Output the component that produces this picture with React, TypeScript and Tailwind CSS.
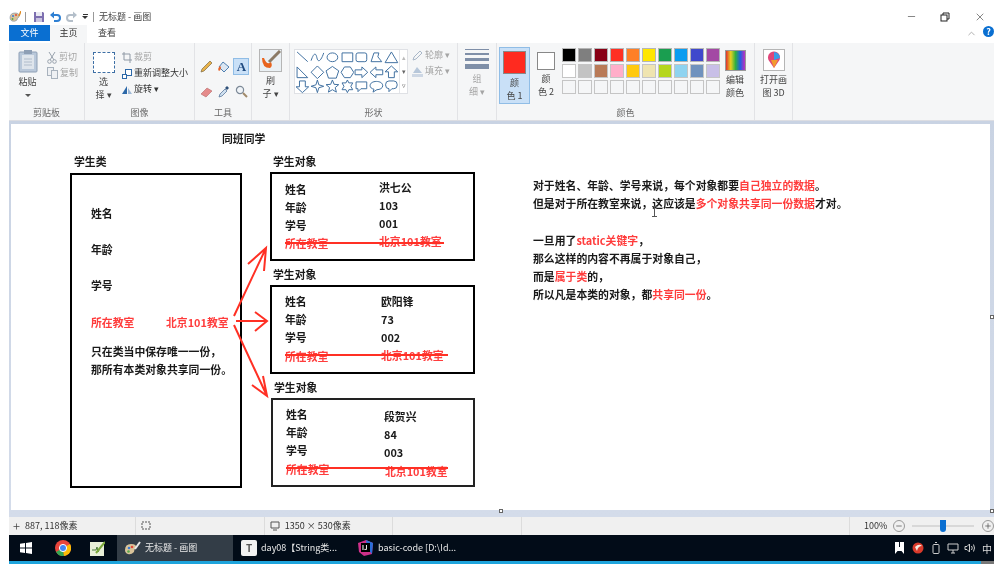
import type { ReactNode } from 'react'
import { Minus, X, ChevronUp, Plus } from 'lucide-react'

const row1 = ['bg-[#000000]', 'bg-[#7f7f7f]', 'bg-[#880015]', 'bg-[#ff3024]', 'bg-[#ff7f27]', 'bg-[#ffe600]', 'bg-[#1a9e50]', 'bg-[#0a9cf0]', 'bg-[#3f48cc]', 'bg-[#a349a4]']
const row2 = ['bg-[#ffffff]', 'bg-[#c3c3c3]', 'bg-[#b97a57]', 'bg-[#ffaec9]', 'bg-[#ffc90e]', 'bg-[#efe4b0]', 'bg-[#b5d61d]', 'bg-[#8fd3f0]', 'bg-[#7092be]', 'bg-[#c8bfe7]']

const shapes = [
  'M2 2 L13 12',
  'M1 11 C4 2 6 3 7 8 S11 12 14 3',
  'M2 7.5 a5.5 4.5 0 1 0 11 0 a5.5 4.5 0 1 0 -11 0',
  'M2 3 H13 V12 H2 Z',
  'M4 3 H11 Q13 3 13 5 V10 Q13 12 11 12 H4 Q2 12 2 10 V5 Q2 3 4 3 Z',
  'M2 12 L5 3 H10 L9 7 L13 12 Z',
  'M7.5 2 L14 13 H1 Z',
  'M2 2 V13 H13 Z',
  'M7.5 1 L14 7.5 L7.5 14 L1 7.5 Z',
  'M7.5 1.5 L14 6 L11.5 13.5 H3.5 L1 6 Z',
  'M4.5 2 H10.5 L14 7.5 L10.5 13 H4.5 L1 7.5 Z',
  'M1 5 H8 V2 L14 7.5 L8 13 V10 H1 Z',
  'M14 5 H7 V2 L1 7.5 L7 13 V10 H14 Z',
  'M7.5 1 L14 7 H10.5 V13 H4.5 V7 H1 Z',
  'M4.5 2 H10.5 V8 H14 L7.5 14 L1 8 H4.5 Z',
  'M7.5 1 L9 6 L14 7.5 L9 9 L7.5 14 L6 9 L1 7.5 L6 6 Z',
  'M7.5 1 L9.3 5.5 L14 5.8 L10.4 8.8 L11.6 13.5 L7.5 11 L3.4 13.5 L4.6 8.8 L1 5.8 L5.7 5.5 Z',
  'M7.5 1 L9 4 H13 L11 7.5 L13 11 H9 L7.5 14 L6 11 H2 L4 7.5 L2 4 H6 Z',
  'M2 3 H13 V10 H7 L4 13 V10 H2 Z',
  'M7.5 2.5 C11 2.5 14 4 14 7 C14 9.5 11 11 8 11 L4 13.5 L5 10.5 C2.5 10 1 8.5 1 7 C1 4 4 2.5 7.5 2.5 Z',
  'M5 2 H10 Q13.5 2 13.5 6 Q13.5 10 10 10 H8 L5 13 V10 Q1.5 10 1.5 6 Q1.5 2 5 2 Z',
]

function Group({ className, label, children }: { className: string; label: string; children: ReactNode }) {
  return (
    <div className={`flex flex-col border-r border-[#e2e3e6] ${className}`}>
      <div className="h-[62px] flex pt-[6px]">{children}</div>
      <div className="text-center text-[9px] leading-[14px] text-[#6a6a6a] mt-[1px]">{label}</div>
    </div>
  )
}

function Label({ lines, className = '' }: { lines: string[]; className?: string }) {
  return (
    <div className={`text-center text-[9px] leading-[13px] text-[#444] mt-[2px] ${className}`}>
      {lines.map((l) => <div key={l}>{l}</div>)}
    </div>
  )
}

function Small({ icon, text, dim }: { icon: ReactNode; text: string; dim?: boolean }) {
  return (
    <div className={`flex items-center h-[16px] gap-[2px] text-[9px] leading-[14px] whitespace-nowrap ${dim ? 'text-[#a5a5a5]' : 'text-[#333]'}`}>
      {icon}
      <span>{text}</span>
    </div>
  )
}

function TitleBar() {
  return (
    <div className="h-[17px] bg-white flex items-center text-[9px] text-[#444]">
      <svg width="12" height="12" viewBox="0 0 12 12">
        <path d="M1 7 Q1 2 6 2 Q11 2 10 6 Q8 7 8 9 Q6 11 3 10 Q1 9 1 7 Z" fill="#d9c39a" stroke="#7a8aa0" strokeWidth=".6" />
        <circle cx="4" cy="5" r="1" fill="#3a7bd5" /><circle cx="7" cy="4" r="1" fill="#e04a3a" /><circle cx="3.5" cy="8" r="1" fill="#5aa84a" />
        <path d="M10 5 L12 0" stroke="#e08a20" strokeWidth="1.4" />
      </svg>
      <div className="w-px h-[10px] bg-[#999] ml-[4px]" />
      <svg className="ml-[7px]" width="12" height="12" viewBox="0 0 12 12">
        <path d="M1 1 H10 L11 2 V11 H1 Z" fill="#7d6fb0" />
        <rect x="3" y="1" width="6" height="4" fill="#e9e9f2" />
        <rect x="3" y="7" width="6" height="4" fill="#c9c3df" />
      </svg>
      <svg className="ml-[5px]" width="11" height="11" viewBox="0 0 11 11" fill="none">
        <path d="M2 4 H7 A3 3 0 0 1 7 10 H4" stroke="#2d7fd3" strokeWidth="2" />
        <path d="M4 0.5 V7.5 L0 4 Z" fill="#2d7fd3" />
      </svg>
      <svg className="ml-[5px]" width="11" height="11" viewBox="0 0 11 11" fill="none">
        <path d="M9 4 H4 A3 3 0 0 0 4 10 H7" stroke="#b4bfca" strokeWidth="2" />
        <path d="M7 0.5 V7.5 L11 4 Z" fill="#b4bfca" />
      </svg>
      <div className="ml-[5px] flex flex-col items-center gap-[1px]">
        <div className="w-[5px] h-px bg-[#333]" />
        <div className="w-0 h-0 border-x-[3px] border-x-transparent border-t-[3px] border-t-[#333]" />
      </div>
      <div className="w-px h-[10px] bg-[#999] ml-[5px]" />
      <span className="ml-[5px]">无标题 - 画图</span>
      <div className="ml-auto flex items-center text-[#222]">
        <Minus size={11} strokeWidth={1.2} className="mr-[23px]" />
        <svg className="mr-[24px]" width="10" height="10" viewBox="0 0 10 10" fill="none" stroke="#222" strokeWidth="1">
          <rect x="1" y="3" width="6" height="6" />
          <path d="M3 3 V1 H9 V7 H7" />
        </svg>
        <X size={12} strokeWidth={1.1} className="mr-[8px]" />
      </div>
    </div>
  )
}

function TabRow() {
  return (
    <div className="h-[18px] bg-white flex items-start text-[9px] leading-[16px]">
      <div className="w-[41px] h-[16px] bg-[#0a6fd1] text-white text-center">文件</div>
      <div className="w-[37px] h-[18px] bg-[#f5f6f7] text-[#333] text-center">主页</div>
      <div className="ml-[11px] text-[#444]">查看</div>
      <ChevronUp size={11} className="ml-auto mt-[3px] text-[#aaa]" />
      <div className="ml-[6px] mt-[1px] w-[11px] h-[11px] rounded-full bg-[#0a6fd1] text-white text-[9px] leading-[11px] font-bold text-center">?</div>
    </div>
  )
}

function Ribbon() {
  return (
    <div className="h-[78px] bg-[#f5f6f7] flex border-b border-[#dcdde2]">
      <Group className="w-[76px]" label="剪贴板">
        <div className="w-[38px] flex flex-col items-center pr-[1px]">
          <svg width="20" height="24" viewBox="0 0 20 24">
            <rect x="1" y="3" width="18" height="20" rx="1" fill="#b9c8da" stroke="#8e9fb5" />
            <rect x="4" y="6" width="12" height="14" fill="#dfe5ec" />
            <rect x="6" y="1" width="8" height="4" fill="#8e9fb5" />
            <path d="M6 10 H14 M6 13 H14 M6 16 H14" stroke="#b0bccb" />
          </svg>
          <Label lines={['粘贴']} className="mt-[1px]" />
          <div className="mt-[6px] w-0 h-0 border-x-[3px] border-x-transparent border-t-[3px] border-t-[#555]" />
        </div>
        <div className="flex flex-col">
          <Small dim text="剪切" icon={<svg width="10" height="13" viewBox="0 0 10 13" fill="none" stroke="#98a2ad"><path d="M2 1 L7 9 M8 1 L3 9" /><circle cx="2.5" cy="10.5" r="1.8" /><circle cx="7.5" cy="10.5" r="1.8" /></svg>} />
          <Small dim text="复制" icon={<svg width="11" height="12" viewBox="0 0 11 12" fill="#eef0f3" stroke="#a8b2bd"><rect x="0.5" y="0.5" width="6" height="8" /><rect x="4.5" y="3.5" width="6" height="8" /></svg>} />
        </div>
      </Group>
      <Group className="w-[110px]" label="图像">
        <div className="w-[37px] flex flex-col items-center">
          <div className="w-[22px] h-[21px] mt-[3px] border border-dashed border-[#3d6fa5] bg-white" />
          <Label lines={['选', '择 ▾']} className="mt-[0px]" />
        </div>
        <div className="flex flex-col">
          <Small dim text="裁剪" icon={<svg width="10" height="11" viewBox="0 0 10 11" fill="none" stroke="#8f99a5"><path d="M2 0 V8 H10 M0 2 H8 V11" /></svg>} />
          <Small text="重新调整大小" icon={<svg width="10" height="11" viewBox="0 0 10 11" fill="#fff" stroke="#2c68a8"><rect x="3.5" y="1.5" width="6" height="6" /><rect x="0.5" y="6.5" width="4" height="4" /></svg>} />
          <Small text="旋转 ▾" icon={<svg width="10" height="11" viewBox="0 0 10 11"><path d="M5 2 L5 10 H0 Z" fill="#2c68a8" /><path d="M6 4 L10 10 H6 Z" fill="#9db8d6" /></svg>} />
        </div>
      </Group>
      <Group className="w-[57px]" label="工具">
        <div className="grid grid-cols-3 grid-rows-2 w-[52px] ml-[3px] h-[50px] mt-[5px] items-center justify-items-center">
          <svg width="13" height="13" viewBox="0 0 13 13"><path d="M1 12 L2 9 L10 1 L12 3 L4 11 Z" fill="#e8b24a" stroke="#7c6a45" strokeWidth=".7" /></svg>
          <svg width="14" height="14" viewBox="0 0 14 14"><path d="M6 2 L12 7 L7 12 L2 7 Z" fill="#dbe6f2" stroke="#4f7fb0" /><path d="M3 6 Q0 9 2 11 Q4 10 4 7 Z" fill="#e8642a" /></svg>
          <div className="w-[16px] h-[17px] bg-[#c9e0f7] border border-[#90bde6] text-[#1f4a80] text-[13px] leading-[15px] font-bold text-center font-['Liberation_Serif',serif]">A</div>
          <svg width="13" height="12" viewBox="0 0 13 12"><path d="M1 8 L7 2 L12 5 L6 11 Z" fill="#e58b8b" stroke="#b56a6a" strokeWidth=".6" /></svg>
          <svg width="12" height="13" viewBox="0 0 12 13"><path d="M1 12 L2 9 L7 4 L9 6 L4 11 Z" fill="#cfe0f0" stroke="#4a6a90" strokeWidth=".7" /><path d="M7 3 L9 1 L11 3 L9 5 Z" fill="#2d4f78" /></svg>
          <svg width="13" height="13" viewBox="0 0 13 13" fill="none" stroke="#7d8a98" strokeWidth="1.2"><circle cx="5" cy="5" r="3.6" fill="#f0f4f8" /><path d="M8 8 L12 12" strokeWidth="2" stroke="#a08a6a" /></svg>
        </div>
      </Group>
      <Group className="w-[38px]" label="">
        <div className="w-[38px] flex flex-col items-center">
          <div className="w-[23px] h-[23px] border border-[#b5b5b5] bg-[#eaf0f4]">
            <svg width="21" height="21" viewBox="0 0 21 21" fill="none">
              <path d="M20 1 L9 12" stroke="#8a7a66" strokeWidth="3" />
              <path d="M2 8 Q2 18 10 18 Q13 16 11 12 Q7 16 4 8 Z" fill="#e8641e" />
            </svg>
          </div>
          <Label lines={['刷', '子 ▾']} className="mt-[1px]" />
        </div>
      </Group>
      <Group className="w-[168px]" label="形状">
        <div className="ml-[4px] w-[114px] h-[45px] bg-white border border-[#dfe1e5] flex">
          <div className="w-[104px] grid grid-cols-7 content-start">
            {shapes.map((d) => (
              <svg key={d} className="w-[14.8px] h-[14.6px]" viewBox="0 0 15 15" fill="none" stroke="#3f6f9f" strokeWidth="1">
                <path d={d} />
              </svg>
            ))}
          </div>
          <div className="flex-1 border-l border-[#e3e5e9] flex flex-col items-center justify-around text-[7px] leading-[9px] text-[#666]">
            <span className="text-[#bbb]">▴</span><span>▾</span><span>▿</span>
          </div>
        </div>
        <div className="flex flex-col ml-[4px] mt-[-2px]">
          <Small dim text="轮廓 ▾" icon={<svg width="11" height="11" viewBox="0 0 11 11" fill="none" stroke="#a9b7c8"><path d="M1 10 L2 7 L8 1 L10 3 L4 9 Z" /></svg>} />
          <Small dim text="填充 ▾" icon={<svg width="11" height="11" viewBox="0 0 11 11"><path d="M5 1 L10 7 H1 Z" fill="#b7c7da" /><rect x="0" y="8" width="11" height="3" fill="#cdd7e4" /></svg>} />
        </div>
      </Group>
      <Group className="w-[39px]" label="">
        <div className="w-[39px] flex flex-col items-center">
          <div className="w-[24px] flex flex-col gap-[3px]">
            <div className="h-px bg-[#7f8fa8]" />
            <div className="h-[2px] bg-[#7f8fa8]" />
            <div className="h-[3px] bg-[#7f8fa8]" />
            <div className="h-[5px] bg-[#7f8fa8]" />
          </div>
          <Label lines={['组', '细 ▾']} className="mt-[3px] text-[#a5a5a5]" />
        </div>
      </Group>
      <Group className="w-[258px]" label="颜色">
        <div className="flex -mt-[2px] ml-[2px]">
          <div className="w-[31px] h-[57px] bg-[#c9e0f7] border border-[#90bde6] flex flex-col items-center pt-[3px]">
            <div className="w-[23px] h-[23px] bg-[#ff2a1f] border border-[#888]" />
            <Label lines={['颜', '色 1']} className="mt-[0px]" />
          </div>
          <div className="w-[32px] flex flex-col items-center pt-[5px]">
            <div className="w-[18px] h-[18px] bg-white border border-[#888]" />
            <Label lines={['颜', '色 2']} className="mt-[2px]" />
          </div>
          <div className="grid grid-cols-10 gap-[2px] content-start pt-[1px]">
            {row1.map((c, i) => <div key={'a' + i} className={`w-[14px] h-[14px] border border-[#b5b5b5] ${c}`} />)}
            {row2.map((c, i) => <div key={'b' + i} className={`w-[14px] h-[14px] border border-[#c5c5c5] ${c}`} />)}
            {row1.map((_, i) => <div key={'c' + i} className="w-[14px] h-[14px] border border-[#c5c5c5] bg-[#f5f6f7]" />)}
          </div>
          <div className="w-[30px] flex flex-col items-center pt-[3px]">
            <div className="w-[21px] h-[21px] border border-[#999] bg-[linear-gradient(90deg,#e03030,#e8d020,#30b040,#2060e0,#c030c0)]" />
            <Label lines={['编辑', '颜色']} className="mt-[2px]" />
          </div>
        </div>
      </Group>
      <Group className="w-[38px]" label="">
        <div className="w-[38px] flex flex-col items-center">
          <div className="w-[22px] h-[22px] bg-white border border-[#b5b5b5] flex items-center justify-center">
            <svg width="14" height="18" viewBox="0 0 14 18">
              <path d="M7 17 L1.5 9 A6 6 0 1 1 12.5 9 Z" fill="#e0457a" />
              <path d="M7 1 A6 6 0 0 1 13 7 L7 9 Z" fill="#3a9be8" />
              <path d="M7 17 L4 9 L11 9 Z" fill="#f29a2e" />
            </svg>
          </div>
          <Label lines={['打开画', '图 3D']} className="mt-[2px]" />
        </div>
      </Group>
    </div>
  )
}

function Txt({ className, children }: { className: string; children: ReactNode }) {
  return <div className={`absolute whitespace-nowrap text-[10.85px] leading-[14px] font-bold ${className}`}>{children}</div>
}

const red = 'text-[#ff3c3c]'
const black = 'text-[#1a1a1a]'

function Canvas() {
  return (
    <div className="relative ml-[2px] mt-[3px] w-[979px] h-[386px] bg-white">
      <Txt className={`left-[211px] top-[7px] ${black}`}>同班同学</Txt>
      <Txt className={`left-[63px] top-[30px] ${black}`}>学生类</Txt>

      <div className="absolute left-[59px] top-[49px] w-[172px] h-[315px] border-2 border-black" />
      <Txt className={`left-[80px] top-[82px] ${black}`}>姓名</Txt>
      <Txt className={`left-[80px] top-[118px] ${black}`}>年龄</Txt>
      <Txt className={`left-[80px] top-[154px] ${black}`}>学号</Txt>
      <Txt className={`left-[80px] top-[191px] ${red}`}>所在教室</Txt>
      <Txt className={`left-[155px] top-[191px] ${red}`}>北京101教室</Txt>
      <Txt className={`left-[80px] top-[220px] ${black}`}>只在类当中保存唯一一份，</Txt>
      <Txt className={`left-[80px] top-[238px] ${black}`}>那所有本类对象共享同一份。</Txt>

      <Txt className={`left-[262px] top-[30px] ${black}`}>学生对象</Txt>
      <div className="absolute left-[259px] top-[48px] w-[205px] h-[89px] border-2 border-black" />
      <Txt className={`left-[274px] top-[58px] ${black}`}>姓名</Txt>
      <Txt className={`left-[368px] top-[56px] ${black}`}>洪七公</Txt>
      <Txt className={`left-[274px] top-[76px] ${black}`}>年龄</Txt>
      <Txt className={`left-[368px] top-[74px] ${black}`}>103</Txt>
      <Txt className={`left-[274px] top-[94px] ${black}`}>学号</Txt>
      <Txt className={`left-[368px] top-[92px] ${black}`}>001</Txt>
      <Txt className={`left-[274px] top-[112px] ${red}`}>所在教室</Txt>
      <Txt className={`left-[368px] top-[110px] ${red}`}>北京101教室</Txt>

      <Txt className={`left-[262px] top-[143px] ${black}`}>学生对象</Txt>
      <div className="absolute left-[259px] top-[161px] w-[205px] h-[89px] border-2 border-black" />
      <Txt className={`left-[274px] top-[170px] ${black}`}>姓名</Txt>
      <Txt className={`left-[370px] top-[170px] ${black}`}>欧阳锋</Txt>
      <Txt className={`left-[274px] top-[188px] ${black}`}>年龄</Txt>
      <Txt className={`left-[370px] top-[188px] ${black}`}>73</Txt>
      <Txt className={`left-[274px] top-[206px] ${black}`}>学号</Txt>
      <Txt className={`left-[370px] top-[206px] ${black}`}>002</Txt>
      <Txt className={`left-[274px] top-[225px] ${red}`}>所在教室</Txt>
      <Txt className={`left-[370px] top-[224px] ${red}`}>北京101教室</Txt>

      <Txt className={`left-[263px] top-[256px] ${black}`}>学生对象</Txt>
      <div className="absolute left-[260px] top-[274px] w-[204px] h-[89px] border-2 border-[#222]" />
      <Txt className={`left-[275px] top-[283px] ${black}`}>姓名</Txt>
      <Txt className={`left-[373px] top-[285px] ${black}`}>段贺兴</Txt>
      <Txt className={`left-[275px] top-[301px] ${black}`}>年龄</Txt>
      <Txt className={`left-[373px] top-[303px] ${black}`}>84</Txt>
      <Txt className={`left-[275px] top-[319px] ${black}`}>学号</Txt>
      <Txt className={`left-[373px] top-[321px] ${black}`}>003</Txt>
      <Txt className={`left-[275px] top-[338px] ${red}`}>所在教室</Txt>
      <Txt className={`left-[374px] top-[340px] ${red}`}>北京101教室</Txt>

      <svg className="absolute inset-0" width="979" height="386" viewBox="11 124 979 386" fill="none" stroke="#ff3024" strokeWidth="2">
        <path d="M285 243 H444" />
        <path d="M285 355 H448" />
        <path d="M286 468 H448" />
        <path d="M234 316 L266 248 M248 264 L266 248 L264 271" />
        <path d="M236 321 H267 M255 312 L267 321 L255 331" />
        <path d="M234 325 L267 396 M252 385 L267 396 L263 376" />
      </svg>

      <Txt className={`left-[522px] top-[54px] ${black}`}>对于姓名、年龄、学号来说，每个对象都要<span className={red}>自己独立的数据</span>。</Txt>
      <Txt className={`left-[522px] top-[72px] ${black}`}>但是对于所在教室来说，这应该是<span className={red}>多个对象共享同一份数据</span>才对。</Txt>
      <Txt className={`left-[522px] top-[109px] ${black}`}>一旦用了<span className={red}>static关键字</span>，</Txt>
      <Txt className={`left-[522px] top-[127px] ${black}`}>那么这样的内容不再属于对象自己，</Txt>
      <Txt className={`left-[522px] top-[145px] ${black}`}>而是<span className={red}>属于类</span>的，</Txt>
      <Txt className={`left-[522px] top-[163px] ${black}`}>所以凡是本类的对象，都<span className={red}>共享同一份</span>。</Txt>

      {/* text cursor over the canvas */}
      <svg className="absolute left-[641px] top-[82px]" width="5" height="11" viewBox="0 0 5 11" fill="none" stroke="#555">
        <path d="M0 .5 H5 M2.5 .5 V10.5 M0 10.5 H5" />
      </svg>
    </div>
  )
}

function StatusBar() {
  return (
    <div className="h-[18px] bg-[#f0f0f0] flex items-center text-[9px] text-[#333]">
      <div className="w-[128px] h-full flex items-center border-r border-[#dcdcdc] pl-[3px]">
        <Plus size={9} className="text-[#444]" />
        <span className="ml-[4px]">887, 118像素</span>
      </div>
      <div className="w-[129px] h-full flex items-center border-r border-[#dcdcdc] pl-[5px]">
        <svg width="10" height="10" viewBox="0 0 10 10" fill="none" stroke="#555"><path d="M1 1 H9 V8 H1 Z" strokeDasharray="2 1" /></svg>
      </div>
      <div className="w-[129px] h-full flex items-center border-r border-[#dcdcdc] pl-[5px]">
        <svg width="10" height="10" viewBox="0 0 10 10" fill="none" stroke="#555"><path d="M1 1 H9 V7 H1 Z M3 9 H7" /></svg>
        <span className="ml-[5px]">1350 × 530像素</span>
      </div>
      <div className="w-[129px] h-full border-r border-[#dcdcdc]" />
      <div className="w-[330px] h-full border-r border-[#dcdcdc]" />
      <span className="ml-[14px] text-[9px]">100%</span>
      <div className="ml-[6px] w-[12px] h-[12px] rounded-full border border-[#999] flex items-center justify-center"><Minus size={8} className="text-[#444]" /></div>
      <div className="ml-[7px] w-[62px] h-[2px] bg-[#d8d8d8] relative">
        <div className="absolute left-[28px] -top-[5px] w-[6px] h-[12px] bg-[#0a6fd1] rounded-b-[3px]" />
      </div>
      <div className="ml-[8px] w-[12px] h-[12px] rounded-full border border-[#999] flex items-center justify-center"><Plus size={8} className="text-[#444]" /></div>
    </div>
  )
}

function Taskbar() {
  return (
    <div className="h-[29px] flex flex-col">
      <div className="h-[26px] bg-[#020c18] flex items-center text-[9px] text-[#e8e8e8]">
        <svg className="ml-[11px]" width="12" height="12" viewBox="0 0 12 12" fill="#fff">
          <path d="M0 1.7 L5 1 V5.6 H0 Z M6 .9 L12 0 V5.6 H6 Z M0 6.4 H5 V11 L0 10.3 Z M6 6.4 H12 V12 L6 11.1 Z" />
        </svg>
        <svg className="ml-[23px]" width="16" height="16" viewBox="0 0 16 16">
          <circle cx="8" cy="8" r="8" fill="#e8453c" />
          <path d="M8 8 L1 12 A8 8 0 0 0 9 16 Z" fill="#34a853" />
          <path d="M8 8 L9 16 A8 8 0 0 0 15 4 Z" fill="#fbbc05" />
          <circle cx="8" cy="8" r="3.6" fill="#4285f4" stroke="#fff" />
        </svg>
        <svg className="ml-[19px]" width="15" height="15" viewBox="0 0 15 15">
          <rect x="0" y="1" width="14" height="14" fill="#e8efd8" />
          <path d="M2 9 H6 M6 9 L7 6 L8 11 L9 9" stroke="#4a7a3a" fill="none" />
          <path d="M6 12 L15 1" stroke="#7aa83a" strokeWidth="2" />
        </svg>
        <div className="ml-[12px] w-[116px] h-full bg-[#333d47] flex items-center pl-[7px]">
          <svg width="17" height="15" viewBox="0 0 17 15">
            <path d="M1 9 Q1 3 7 3 Q13 3 12 7 Q10 8 10 11 Q7 14 4 13 Q1 12 1 9 Z" fill="#d9c39a" />
            <circle cx="5" cy="7" r="1.3" fill="#3a7bd5" /><circle cx="8" cy="6" r="1.3" fill="#e04a3a" /><circle cx="4.5" cy="10.5" r="1.3" fill="#5aa84a" />
            <path d="M11 8 L16 1" stroke="#e8e8e8" strokeWidth="2" />
          </svg>
          <span className="ml-[4px] whitespace-nowrap">无标题 - 画图</span>
        </div>
        <div className="ml-[8px] w-[16px] h-[16px] bg-[#f2f2f2] rounded-[2px] text-[#555] text-[10px] leading-[16px] text-center font-bold">T</div>
        <span className="ml-[4px] w-[97px] whitespace-nowrap">day08【String类...</span>
        <svg width="15" height="16" viewBox="0 0 15 16">
          <path d="M0 3 L8 0 L15 3 L14 14 L6 16 L1 12 Z" fill="#d0308a" />
          <path d="M8 0 L15 3 L14 14 L9 8 Z" fill="#2a6fd8" />
          <rect x="3" y="3" width="9" height="9" fill="#000" />
          <text x="4" y="9.5" fontSize="6" fill="#fff" fontWeight="bold">IJ</text>
        </svg>
        <span className="ml-[5px] whitespace-nowrap">basic-code [D:\Id...</span>
        <div className="ml-auto flex items-center mr-[2px]">
          <svg width="9" height="12" viewBox="0 0 9 12" fill="#fff"><path d="M0 0 H4 V5 H5 V0 H9 V12 L6.5 9 H2.5 L0 12 Z" /></svg>
          <svg className="ml-[8px]" width="12" height="12" viewBox="0 0 12 12"><circle cx="6" cy="6" r="5.5" fill="#d93a2b" /><path d="M3 5 Q7 1 10 4 Q6 4 5 9 Z" fill="#f5e9e0" /></svg>
          <svg className="ml-[8px]" width="9" height="13" viewBox="0 0 9 13" fill="none" stroke="#ccc"><rect x="1" y="2.5" width="6" height="9" rx="1" /><path d="M3 .5 H5" /></svg>
          <svg className="ml-[6px]" width="12" height="11" viewBox="0 0 12 11" fill="none" stroke="#ccc"><path d="M1 1 H11 V7 H1 Z M4 10 H8 M6 7 V10" /></svg>
          <svg className="ml-[5px]" width="12" height="10" viewBox="0 0 12 10" fill="none" stroke="#ccc"><path d="M1 3.5 H3 L5.5 1 V9 L3 6.5 H1 Z M7.5 3 Q9 5 7.5 7 M9.5 1.5 Q11.5 5 9.5 8.5" /></svg>
          <span className="ml-[6px] text-[10px] text-[#ddd]">中</span>
        </div>
      </div>
      <div className="h-[3px] flex">
        <div className="w-[972px] bg-[#1ea4dc]" />
        <div className="flex-1 bg-[#777]" />
      </div>
    </div>
  )
}

export default function App() {
  return (
    <div className="w-[1006px] h-[570px] overflow-hidden bg-white pl-[9px] pt-[8px] pr-[12px] font-['Noto_Sans_CJK_SC','Liberation_Sans',sans-serif] blur-[0.35px]">
      <div className="w-[985px] flex flex-col">
        <TitleBar />
        <TabRow />
        <Ribbon />
        <div className="relative h-[396px] bg-[linear-gradient(180deg,#c9d3e3,#d4dcea)] overflow-hidden">
          <Canvas />
          {/* resize handles of the image */}
          <div className="absolute left-[981px] top-[194px] w-[4px] h-[4px] bg-white border border-[#666]" />
          <div className="absolute left-[490px] top-[388px] w-[4px] h-[4px] bg-white border border-[#666]" />
          <div className="absolute left-[981px] top-[388px] w-[4px] h-[4px] bg-white border border-[#666]" />
        </div>
        <StatusBar />
        <Taskbar />
      </div>
    </div>
  )
}
